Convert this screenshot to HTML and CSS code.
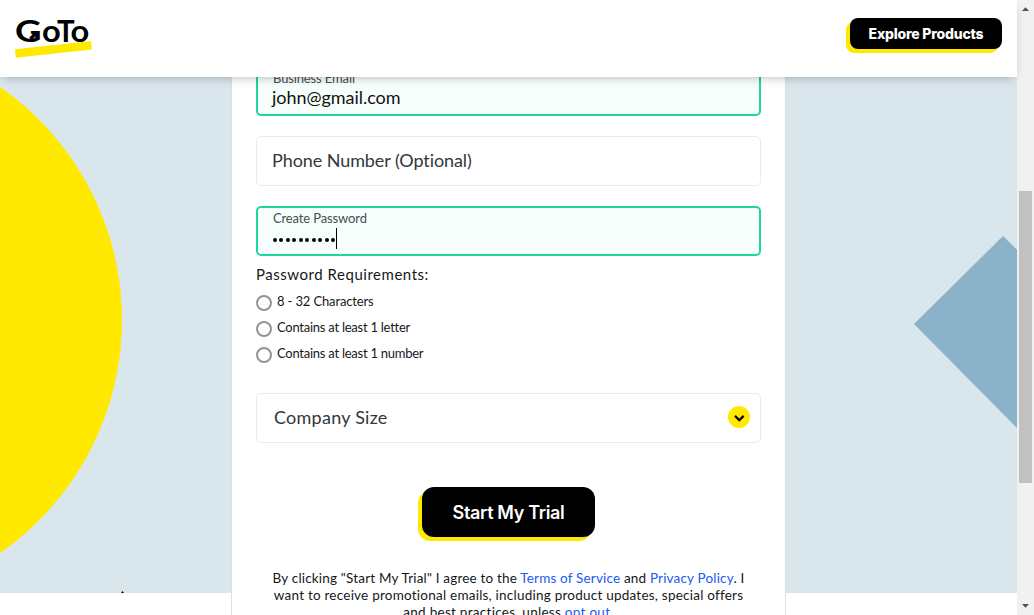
FILE: index.html
```html
<!DOCTYPE html>
<html lang="en">
<head>
<meta charset="utf-8">
<title>GoTo – Start My Trial</title>
<link rel="stylesheet" href="styles.css">
</head>
<body>
<div class="page">
  <header class="header">
    <svg class="logo" width="78" height="42" viewBox="0 0 78 42" role="img" aria-label="GoTo">
      <path class="logo-bar" d="M0 33.2L76 25.1L76.8 33.6L.8 41.8Z"/>
      <g class="logo-text">
        <text transform="translate(-.1 25.8) scale(1.22 1)">G</text>
        <text transform="translate(27 25.8) scale(1.09 1)">o</text>
        <text transform="translate(42 25.8) scale(.98 1)">T</text>
        <text transform="translate(55.4 25.8) scale(1.09 1)">o</text>
      </g>
      <path class="logo-arrow" d="M21.5 16.5L15.5 23"/>
    </svg>
    <button class="button button-small">Explore Products</button>
  </header>
  <main class="main">
    <svg class="shapes" width="1017" height="516" viewBox="0 77 1017 516" aria-hidden="true">
      <circle cx="-161.5" cy="320" r="283.5" fill="#ffe900"/>
      <path d="M914 324L1003 236L1107 339L1018 429Z" fill="#8ab2c8"/>
      <path d="M121 593L122.5 591L124 593Z" fill="#000"/>
    </svg>
    <form class="card">
      <div class="field field-valid">
        <span class="label">Business Email</span>
        <span class="value">john@gmail.com</span>
      </div>
      <div class="field field-empty"><span class="placeholder-phone">Phone Number (Optional)</span></div>
      <div class="field field-valid">
        <span class="label">Create Password</span>
        <span class="password"><i></i><i></i><i></i><i></i><i></i><i></i><i></i><i></i><i></i><i></i><b class="caret"></b></span>
      </div>
      <div class="requirements">
        <h2 class="req-title">Password Requirements:</h2>
        <ul class="req-list">
          <li><span class="ring"></span><span class="req-length">8 - 32 Characters</span></li>
          <li><span class="ring"></span><span>Contains at least 1 letter</span></li>
          <li><span class="ring"></span><span>Contains at least 1 number</span></li>
        </ul>
      </div>
      <div class="field field-empty field-select">
        <span class="placeholder-size">Company Size</span>
        <svg width="22" height="22" viewBox="0 0 22 22" aria-hidden="true"><circle cx="11" cy="11" r="11" fill="#ffe900"/><path d="M7 9.9L11.3 14.2L15.6 9.9" fill="none" stroke="#000" stroke-width="2.2"/></svg>
      </div>
      <button class="button button-large" type="button">Start My Trial</button>
      <p class="legal">
        <span>By clicking "Start My Trial" I agree to the <a>Terms of Service</a> and <a>Privacy Policy</a>. I</span>
        <span class="wide">want to receive promotional emails, including product updates, special offers</span>
        <span class="wider">and best practices, unless <a>opt out</a>.</span>
      </p>
    </form>
  </main>
</div>
<aside class="scrollbar" aria-hidden="true">
  <svg width="17" height="17"><path d="M5 11H12L8.5 7.3Z" fill="#505050"/></svg>
  <div class="track"><div class="thumb"></div></div>
  <svg width="17" height="17"><path d="M5 6H12L8.5 9.7Z" fill="#505050"/></svg>
</aside>
</body>
</html>
```

FILE: styles.css
```css
* { box-sizing: border-box; }
body { margin: 0; width: 1034px; height: 615px; overflow: hidden; display: flex; background: #fff; color: #15181b; font-family: Lato, "Open Sans", sans-serif; font-variant-ligatures: none; }
.page { width: 1017px; height: 615px; display: flex; flex-direction: column; }
.header { position: relative; z-index: 2; flex: 0 0 77px; display: flex; justify-content: space-between; align-items: flex-start; padding: 16px 15px 0 15px; background: #fff; box-shadow: 0 4px 10px -4px rgba(0, 0, 0, .3); }
.logo { overflow: visible; }
.logo-text { font: 700 30px Lato, sans-serif; fill: #000; }
.logo-bar { fill: #ffe900; }
.logo-arrow { fill: none; stroke: #000; stroke-width: 3.4; }
.button { border: 0; padding: 0; background: #000; color: #fff; font-family: Inter, sans-serif; white-space: nowrap; }
.button-small { width: 152px; height: 31px; margin-top: 2px; border-radius: 8px; box-shadow: -4px 4px 0 #ffe900; font-size: 14px; font-weight: 800; letter-spacing: -.2px; }
.button-large { display: block; width: 173px; height: 50px; margin: 44px 0 0 166px; padding-top: 1px; border-radius: 12px; box-shadow: -4px 4px 0 #ffe900; font-size: 18px; font-weight: 600; letter-spacing: -.35px; }
.main { position: relative; flex: 1; height: 538px; overflow: hidden; background: linear-gradient(#d9e6ec 516px, #fff 516px); }
.shapes { position: absolute; left: 0; top: 0; }
.card { position: relative; width: 555px; height: 560px; margin: -11px 0 0 231px; padding: 0 24px; background: #fff; border: solid #dcdfea; border-width: 0 1px; }
.field { width: 505px; height: 50px; margin-bottom: 20px; border-radius: 5px; }
.field-valid { border: 2px solid #1fd6a3; background: #f6fffc; display: flex; flex-direction: column; padding: 1px 14px 0; }
.field-empty { border: 1px solid #ebebeb; background: #fff; display: flex; align-items: center; padding: 0 15px 2px; font-size: 18px; color: #33373b; }
.field-select { justify-content: space-between; padding: 0 10px 2px 17px; margin: 0; }
.placeholder-phone { letter-spacing: -.08px; }
.placeholder-size { letter-spacing: .25px; }
.label { font-size: 13px; line-height: 18px; padding-left: 1px; color: #484d51; letter-spacing: -.13px; }
.value { font-size: 18px; line-height: 20px; color: #111; letter-spacing: -.04px; }
.password { display: flex; align-items: center; height: 22px; padding-left: 1px; gap: 2.45px; }
.password i { width: 4px; height: 4px; flex: none; margin-top: 3px; border-radius: 50%; background: #000; }
.caret { width: 1px; height: 21px; margin-left: -1.5px; background: #000; }
.requirements { height: 137px; margin-top: -20px; padding-top: 7px; }
.req-title { margin: 0; font-size: 15px; line-height: 22px; font-weight: 400; letter-spacing: .53px; }
.req-list { list-style: none; margin: 5px 0 0; padding: 0; font-size: 13px; letter-spacing: -.25px; }
.req-list li { height: 26px; display: flex; align-items: center; gap: 5px; }
.req-list li > :last-child { line-height: 18px; margin-top: -5px; }
.req-list .req-length { letter-spacing: -.14px; }
.ring { width: 16px; height: 16px; border: 2px solid #949494; border-radius: 50%; }
.legal { width: 505px; margin: 33px 0 0; font-size: 13.5px; line-height: 17px; text-align: center; letter-spacing: .18px; }
.legal > span { display: block; white-space: nowrap; }
.legal .wide { letter-spacing: .23px; }
.legal .wider { letter-spacing: .28px; }
.legal a { color: #2159f3; }
.scrollbar { width: 17px; height: 615px; display: flex; flex-direction: column; background: #f1f1f1; }
.scrollbar svg { flex: none; }
.track { flex: 1; padding: 174px 2px 0; }
.thumb { height: 292px; background: #c1c1c1; }
```
